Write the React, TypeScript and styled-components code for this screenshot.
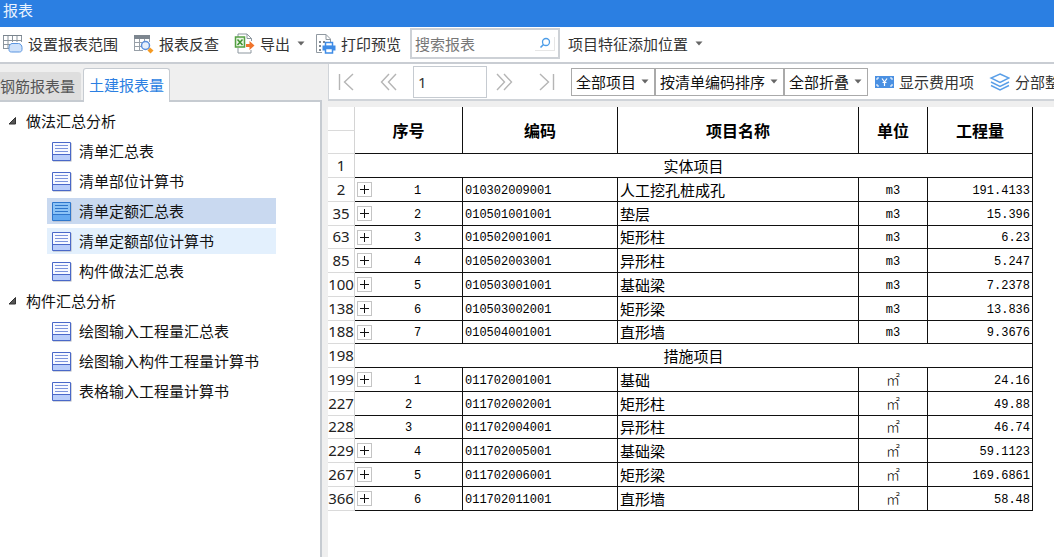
import React from 'react';
import styled, { createGlobalStyle, css } from 'styled-components';

const uiFont = `"Noto Sans", "Noto Sans CJK SC", sans-serif`;
const cjkFont = `"Noto Sans CJK SC", sans-serif`;
const monoFont = `"Liberation Mono", "Noto Sans CJK SC", monospace`;

const Global = createGlobalStyle`
  * { box-sizing: border-box; }
  body { margin: 0; background: #efefef; }
  button, input, select { font: inherit; color: inherit; margin: 0; }
`;

const Page = styled.div`
  display: flex;
  flex-direction: column;
  min-height: 100vh;
  font: 15px/20px ${cjkFont};
  color: #333;
  overflow: hidden;
`;

const TitleBar = styled.header`
  height: 27px;
  padding: 0 3px;
  background: #2b7fe2;
  color: #eaf3ff;
`;

const Title = styled.h1`
  margin: 0;
  font-size: 15px;
  font-weight: 400;
  line-height: 20px;
`;

const Toolbar = styled.div`
  display: flex;
  align-items: center;
  height: 37px;
  padding: 0 0 2px 2px;
  background: #fff;
  border-bottom: 2px solid #c9cdd3;
  white-space: nowrap;
`;

const ToolButton = styled.button<{ $menu?: boolean }>`
  display: flex;
  flex: none;
  align-items: center;
  gap: 5px;
  padding: 0;
  margin-right: ${(p) => (p.$menu ? 10 : 15)}px;
  border: 0;
  background: none;
  white-space: nowrap;
  ${(p) => p.$menu && css`svg:last-child { margin-left: 2px; }`}
`;

const SearchBox = styled.form`
  display: flex;
  flex: none;
  align-items: center;
  width: 150px;
  height: 31px;
  margin: 0 8px 0 -6px;
  padding: 0 3px;
  border: 2px solid #cdd1d6;
  background: #fff;
`;

const SearchInput = styled.input`
  flex: 1;
  min-width: 0;
  padding: 0;
  border: 0;
  outline: 0;
  background: none;
  &::placeholder { color: #777; opacity: 1; }
`;

const SearchButton = styled.button`
  display: flex;
  align-items: center;
  justify-content: center;
  width: 20px;
  height: 14px;
  padding: 0;
  border: 0;
  border-bottom: 1px solid #e6e6e6;
  border-right: 1px solid #e6e6e6;
  background: none;
`;

const Workspace = styled.div`
  display: flex;
  flex: 1;
  gap: 6px;
`;

const Sidebar = styled.aside`
  display: flex;
  flex: none;
  flex-direction: column;
  width: 322px;
`;

const TabStrip = styled.div`
  display: flex;
  align-items: flex-end;
  gap: 2px;
  height: 38px;
  padding-top: 4px;
  border-bottom: 2px solid #c6cbd1;
`;

const Tab = styled.button<{ $active?: boolean }>`
  height: 28px;
  padding: 0 6px 0 0;
  border: 0;
  border-radius: 0 3px 0 0;
  background: #dedede;
  color: #555;
  white-space: nowrap;
  ${(p) =>
    p.$active &&
    css`
      height: 34px;
      margin-bottom: -2px;
      padding: 0 5px 2px;
      border: 1px solid #c6cbd1;
      border-bottom: 0;
      border-radius: 3px 3px 0 0;
      background: #fff;
      color: #2b7fe2;
    `}
`;

const TreePanel = styled.nav`
  flex: 1;
  padding-top: 4px;
  border-right: 2px solid #c6cbd1;
  background: #fff;
  color: #111;
`;

const TreeList = styled.ul`
  margin: 0;
  padding: 0;
  list-style: none;
`;

const GroupButton = styled.button`
  display: flex;
  align-items: center;
  gap: 10px;
  height: 30px;
  padding: 0 0 0 8px;
  border: 0;
  background: none;
`;

const ReportItem = styled.li`
  padding: 2px 0 2px 47px;
`;

const ReportButton = styled.button<{ $state?: 'selected' | 'hover' }>`
  display: flex;
  align-items: center;
  gap: 7px;
  width: 229px;
  height: 26px;
  padding: 0 4px;
  border: 0;
  background: ${(p) =>
    p.$state === 'selected' ? '#c9d9f0' : p.$state === 'hover' ? '#e3f0fd' : 'none'};
  white-space: nowrap;
`;

const Report = styled.main`
  display: flex;
  flex: 1;
  flex-direction: column;
  min-width: 0;
`;

const ReportBar = styled.div`
  display: flex;
  align-items: center;
  height: 37px;
  border-left: 1px solid #d0d4d9;
  border-bottom: 2px solid #d0d4d9;
  background: #fff;
  white-space: nowrap;
  overflow: hidden;
`;

const PagerButton = styled.button`
  display: flex;
  flex: none;
  align-items: center;
  justify-content: center;
  width: 34px;
  height: 30px;
  margin-right: 8px;
  padding: 0;
  border: 0;
  background: none;
`;

const PageInput = styled.input`
  flex: none;
  width: 74px;
  height: 32px;
  padding: 0 4px;
  border: 1px solid #c6cbd1;
  outline: 0;
  font-family: ${uiFont};
`;

const Filters = styled.div`
  display: flex;
  flex: none;
  margin: 0 7px 0 0;
`;

const SelectWrap = styled.div`
  display: grid;
  align-items: center;
  > * { grid-area: 1 / 1; }
  > svg { justify-self: end; margin-right: 6px; pointer-events: none; }
`;

const Select = styled.select`
  appearance: none;
  height: 28px;
  padding: 0 17px 0 4px;
  border: 1px solid #aaa;
  border-radius: 0;
  background: #fff;
  color: #111;
`;

const Sheet = styled.div`
  flex: 1;
  margin-top: 6px;
  background: #fff;
`;

const Table = styled.table`
  width: 705px;
  table-layout: fixed;
  border-collapse: separate;
  border-spacing: 0;
  color: #000;
  font: 15px/20px ${cjkFont};

  tr { height: 24px; }
  thead tr:last-child { height: 23px; }
  tbody tr:nth-child(4n) { height: 23px; }
`;

const HeadCell = styled.th`
  padding: 0;
  border-right: 1px solid #111;
  border-bottom: 1px solid #111;
  font-size: 16px;
  font-weight: 700;
`;

const RowHead = styled.th`
  padding: 0 0 2px;
  border-right: 1px solid #d4d4d4;
  border-bottom: 1px solid #dadada;
  background: #fff;
  color: #222;
  font-family: ${uiFont};
  font-weight: 400;
`;

const Cell = styled.td<{ $align?: 'center' | 'right'; $mono?: boolean }>`
  padding: 0 2px;
  border-right: 1px solid #111;
  border-bottom: 1px solid #111;
  text-align: ${(p) => p.$align ?? 'left'};
  white-space: nowrap;
  ${(p) =>
    p.$mono &&
    css`
      padding-top: 2px;
      font-family: ${monoFont};
      font-size: 12px;
    `}
`;

const SquareMetre = styled.span`
  display: block;
  padding-bottom: 2px;
  font: 300 14px/16px ${cjkFont};
`;

const Ordinal = styled.div`
  display: flex;
  align-items: center;
  span { flex: 1; text-align: center; }
`;

const ExpandButton = styled.button`
  display: flex;
  width: 15px;
  height: 15px;
  margin: 0 3px 2px 0;
  padding: 0;
  border: 1px solid #c4c4c4;
  background: #fff;
`;

const CaretIcon = () => (
  <svg width="8" height="5" viewBox="0 0 8 5" aria-hidden="true">
    <path d="M0.5 0.5h7L4 4.5z" fill="#666" />
  </svg>
);

const RangeIcon = () => (
  <svg width="21" height="20" viewBox="0 0 21 20" fill="none" aria-hidden="true">
    <path d="M1.5 2v12M6 2v12M10.500 2v6M15 2v6M19.500 2v6M1 6.500h19M1 10.500h7M1 14.500h6" stroke="#8b959e" />
    <path d="M1 1.500h19" stroke="#7b858e" />
    <path d="M10 9.500h6.500c2 0 3.500 2 3.500 4v2c0 1.500-1 2.500-2.500 2.500h-8C7.500 18 7 17 7 15.500v-1c0-2.500 1-5 3-5z" fill="#cfe2fa" stroke="#5a95e0" />
  </svg>
);

const LookupIcon = () => (
  <svg width="21" height="20" viewBox="0 0 21 20" fill="none" aria-hidden="true">
    <path d="M1.500 2v15M6.500 5v12M11.500 5v4M16.500 2v6M1 8.500h9M1 12.500h7M1 16.500h9" stroke="#98a0a8" />
    <path d="M1 1h16v4H1z" fill="#7d868f" />
    <circle cx="12.500" cy="11.500" r="4" fill="#e6effc" stroke="#5b8fdc" strokeWidth="1.500" />
    <path d="M17 13.500l3.500 3-3 3-3-3z" fill="#f59a22" />
  </svg>
);

const ExportIcon = () => (
  <svg width="21" height="21" viewBox="0 0 21 21" fill="none" aria-hidden="true">
    <path d="M4 4V1h9l4.500 4.500V8M4 15v5h13v-3" stroke="#8d979f" />
    <path d="M13 1v4.500h4.500" stroke="#8d979f" />
    <path d="M1.500 4h9v10h-9z" fill="#e9f5e4" stroke="#55a043" strokeWidth="1.500" />
    <path d="M3.500 6.500l5 5.500M8.500 6.500l-5 5.500" stroke="#3f9330" strokeWidth="1.500" />
    <path d="M12 11h3.500V8l5 4.500-5 4.500v-3H12z" fill="#f0742c" />
  </svg>
);

const PrintIcon = () => (
  <svg width="21" height="21" viewBox="0 0 21 21" fill="none" aria-hidden="true">
    <path d="M7 19.500H1.500v-18H11l4.500 4.500v3M11 1.500v5h4.500" stroke="#9099a1" />
    <path d="M4 8h2v2H4zM8 8h2v2H8zM4 12h2v2H4zM4 16h2v2H4z" fill="#7f8890" />
    <path d="M10.500 9.500h7v4h-7z" fill="#fff" stroke="#3f8ce6" strokeWidth="1.500" />
    <path d="M7.500 12.500h13v5h-13z" fill="#3f8ce6" />
    <path d="M10.500 15.500h7v4.500h-7z" fill="#fff" stroke="#3f8ce6" strokeWidth="1.500" />
  </svg>
);

const MagnifierIcon = () => (
  <svg width="12" height="12" viewBox="0 0 12 12" fill="none" stroke="#4d9de8" aria-hidden="true">
    <circle cx="7" cy="5" r="3.500" strokeWidth="1.300" />
    <path d="M4.500 7.500L1.500 10.500" strokeWidth="1.600" />
  </svg>
);

const MoneyIcon = () => (
  <svg width="19" height="12" viewBox="0 0 19 12" fill="none" aria-hidden="true">
    <path d="M0 0h19v12H0z" fill="#4a90e2" />
    <path d="M2 4V2h2M15 2h2v2M2 8v2h2M15 10h2V8" stroke="#fff" />
    <path d="M7 2.500L9.500 6 12 2.500M9.500 6v4M7.500 6.500h4" stroke="#fff" strokeWidth="1.200" />
  </svg>
);

const LayersIcon = () => (
  <svg width="21" height="18" viewBox="-1 0 21 18" fill="none" stroke="#5a9fe8" strokeWidth="1.400" aria-hidden="true">
    <path d="M10 1l9 4-9 4.500L1 5z" />
    <path d="M1 9l9 4.500L19 9M1 12.500l9 4.500 9-4.500" />
  </svg>
);

const ReportIcon = ({ selected }: { selected?: boolean }) => (
  <svg width="21" height="21" viewBox="0 0 21 21" fill="none" aria-hidden="true">
    <path d="M2 2h18.500v18.500H2z" fill="#a9afba" />
    <path d="M1.500 1.500h18v18h-18z" fill={selected ? '#8cc3f5' : '#f7f9ff'} stroke={selected ? '#2e76cc' : '#4a68c8'} />
    <path d="M2 14h17v5H2z" fill={selected ? '#63a9f0' : '#b9cdfa'} />
    <path d="M2 13.500h17" stroke={selected ? '#2e76cc' : '#4a68c8'} />
    <path d="M4 4.500h13M4 7.500h13M4 10.500h13" stroke={selected ? '#2e76cc' : '#7c93dc'} />
  </svg>
);

const DisclosureIcon = () => (
  <svg width="8" height="8" viewBox="0 0 8 8" aria-hidden="true">
    <path d="M7.500 0.500v6.500h-6.500z" fill="#555" stroke="#333" />
  </svg>
);

const PlusIcon = () => (
  <svg width="13" height="13" viewBox="0 0 13 13" aria-hidden="true">
    <path d="M2 6.500h9M6.500 2v9" stroke="#111" />
  </svg>
);

const pagerPaths = {
  first: 'M1.500 2v16M15 2L6.500 10l8.500 8',
  previous: 'M9 2L1.500 10 9 18M16 2l-7.500 8 7.500 8',
  next: 'M1 2l7.500 8L1 18M8 2l7.500 8L8 18',
  last: 'M2 2l8.500 8L2 18M15.500 2v16',
};

const Pager = ({ kind, label }: { kind: keyof typeof pagerPaths; label: string }) => (
  <PagerButton type="button" aria-label={label}>
    <svg width="17" height="20" viewBox="0 0 17 20" fill="none" stroke="#b5b5b5" strokeWidth="1.400" aria-hidden="true">
      <path d={pagerPaths[kind]} />
    </svg>
  </PagerButton>
);

const Filter = ({ label, value }: { label: string; value: string }) => (
  <SelectWrap>
    <Select aria-label={label} defaultValue={value}>
      <option>{value}</option>
    </Select>
    <CaretIcon />
  </SelectWrap>
);

type TreeItem = { name: string; state?: 'selected' | 'hover' };

const tree: { name: string; items: TreeItem[] }[] = [
  {
    name: '做法汇总分析',
    items: [
      { name: '清单汇总表' },
      { name: '清单部位计算书' },
      { name: '清单定额汇总表', state: 'selected' },
      { name: '清单定额部位计算书', state: 'hover' },
      { name: '构件做法汇总表' },
    ],
  },
  {
    name: '构件汇总分析',
    items: [
      { name: '绘图输入工程量汇总表' },
      { name: '绘图输入构件工程量计算书' },
      { name: '表格输入工程量计算书' },
    ],
  },
];

type Row =
  | { line: number; section: string }
  | { line: number; no: number; code: string; name: string; unit: string; qty: string; leaf?: boolean };

const rows: Row[] = [
  { line: 1, section: '实体项目' },
  { line: 2, no: 1, code: '010302009001', name: '人工挖孔桩成孔', unit: 'm3', qty: '191.4133' },
  { line: 35, no: 2, code: '010501001001', name: '垫层', unit: 'm3', qty: '15.396' },
  { line: 63, no: 3, code: '010502001001', name: '矩形柱', unit: 'm3', qty: '6.23' },
  { line: 85, no: 4, code: '010502003001', name: '异形柱', unit: 'm3', qty: '5.247' },
  { line: 100, no: 5, code: '010503001001', name: '基础梁', unit: 'm3', qty: '7.2378' },
  { line: 138, no: 6, code: '010503002001', name: '矩形梁', unit: 'm3', qty: '13.836' },
  { line: 188, no: 7, code: '010504001001', name: '直形墙', unit: 'm3', qty: '9.3676' },
  { line: 198, section: '措施项目' },
  { line: 199, no: 1, code: '011702001001', name: '基础', unit: '㎡', qty: '24.16' },
  { line: 227, no: 2, code: '011702002001', name: '矩形柱', unit: '㎡', qty: '49.88', leaf: true },
  { line: 228, no: 3, code: '011702004001', name: '异形柱', unit: '㎡', qty: '46.74', leaf: true },
  { line: 229, no: 4, code: '011702005001', name: '基础梁', unit: '㎡', qty: '59.1123' },
  { line: 267, no: 5, code: '011702006001', name: '矩形梁', unit: '㎡', qty: '169.6861' },
  { line: 366, no: 6, code: '011702011001', name: '直形墙', unit: '㎡', qty: '58.48' },
];

const columnWidths = [27, 108, 155, 241, 69, 105];

export default function App() {
  return (
    <Page>
      <Global />
      <TitleBar>
        <Title>报表</Title>
      </TitleBar>
      <Toolbar>
        <ToolButton type="button"><RangeIcon />设置报表范围</ToolButton>
        <ToolButton type="button"><LookupIcon />报表反查</ToolButton>
        <ToolButton type="button" $menu><ExportIcon />导出<CaretIcon /></ToolButton>
        <ToolButton type="button"><PrintIcon />打印预览</ToolButton>
        <SearchBox role="search" onSubmit={(e) => e.preventDefault()}>
          <SearchInput type="text" aria-label="搜索报表" placeholder="搜索报表" />
          <SearchButton type="submit" aria-label="搜索"><MagnifierIcon /></SearchButton>
        </SearchBox>
        <ToolButton type="button" $menu>项目特征添加位置<CaretIcon /></ToolButton>
      </Toolbar>
      <Workspace>
        <Sidebar>
          <TabStrip role="tablist">
            <Tab type="button" role="tab" aria-selected={false}>钢筋报表量</Tab>
            <Tab type="button" role="tab" aria-selected $active>土建报表量</Tab>
          </TabStrip>
          <TreePanel>
            <TreeList>
              {tree.map((group) => (
                <li key={group.name}>
                  <GroupButton type="button" aria-expanded><DisclosureIcon />{group.name}</GroupButton>
                  <TreeList>
                    {group.items.map((item) => (
                      <ReportItem key={item.name}>
                        <ReportButton type="button" $state={item.state}>
                          <ReportIcon selected={item.state === 'selected'} />
                          {item.name}
                        </ReportButton>
                      </ReportItem>
                    ))}
                  </TreeList>
                </li>
              ))}
            </TreeList>
          </TreePanel>
        </Sidebar>
        <Report>
          <ReportBar>
            <Pager kind="first" label="首页" />
            <Pager kind="previous" label="上一页" />
            <PageInput type="text" aria-label="页码" defaultValue="1" />
            <Pager kind="next" label="下一页" />
            <Pager kind="last" label="末页" />
            <Filters>
              <Filter label="项目范围" value="全部项目" />
              <Filter label="排序方式" value="按清单编码排序" />
              <Filter label="展开方式" value="全部折叠" />
            </Filters>
            <ToolButton type="button"><MoneyIcon />显示费用项</ToolButton>
            <ToolButton type="button"><LayersIcon />分部整理</ToolButton>
          </ReportBar>
          <Sheet>
            <Table>
              <colgroup>
                {columnWidths.map((width, i) => <col key={i} width={width} />)}
              </colgroup>
              <thead>
                <tr>
                  <RowHead />
                  <HeadCell rowSpan={2} scope="col">序号</HeadCell>
                  <HeadCell rowSpan={2} scope="col">编码</HeadCell>
                  <HeadCell rowSpan={2} scope="col">项目名称</HeadCell>
                  <HeadCell rowSpan={2} scope="col">单位</HeadCell>
                  <HeadCell rowSpan={2} scope="col">工程量</HeadCell>
                </tr>
                <tr><RowHead /></tr>
              </thead>
              <tbody>
                {rows.map((row) => (
                  <tr key={row.line}>
                    <RowHead scope="row">{row.line}</RowHead>
                    {'section' in row ? (
                      <Cell colSpan={5} $align="center">{row.section}</Cell>
                    ) : (
                      <>
                        <Cell $mono>
                          <Ordinal>
                            {!row.leaf && (
                              <ExpandButton type="button" aria-label="展开"><PlusIcon /></ExpandButton>
                            )}
                            <span>{row.no}</span>
                          </Ordinal>
                        </Cell>
                        <Cell $mono>{row.code}</Cell>
                        <Cell>{row.name}</Cell>
                        <Cell $mono={row.unit === 'm3'} $align="center">
                          {row.unit === 'm3' ? row.unit : <SquareMetre>{row.unit}</SquareMetre>}
                        </Cell>
                        <Cell $mono $align="right">{row.qty}</Cell>
                      </>
                    )}
                  </tr>
                ))}
              </tbody>
            </Table>
          </Sheet>
        </Report>
      </Workspace>
    </Page>
  );
}
